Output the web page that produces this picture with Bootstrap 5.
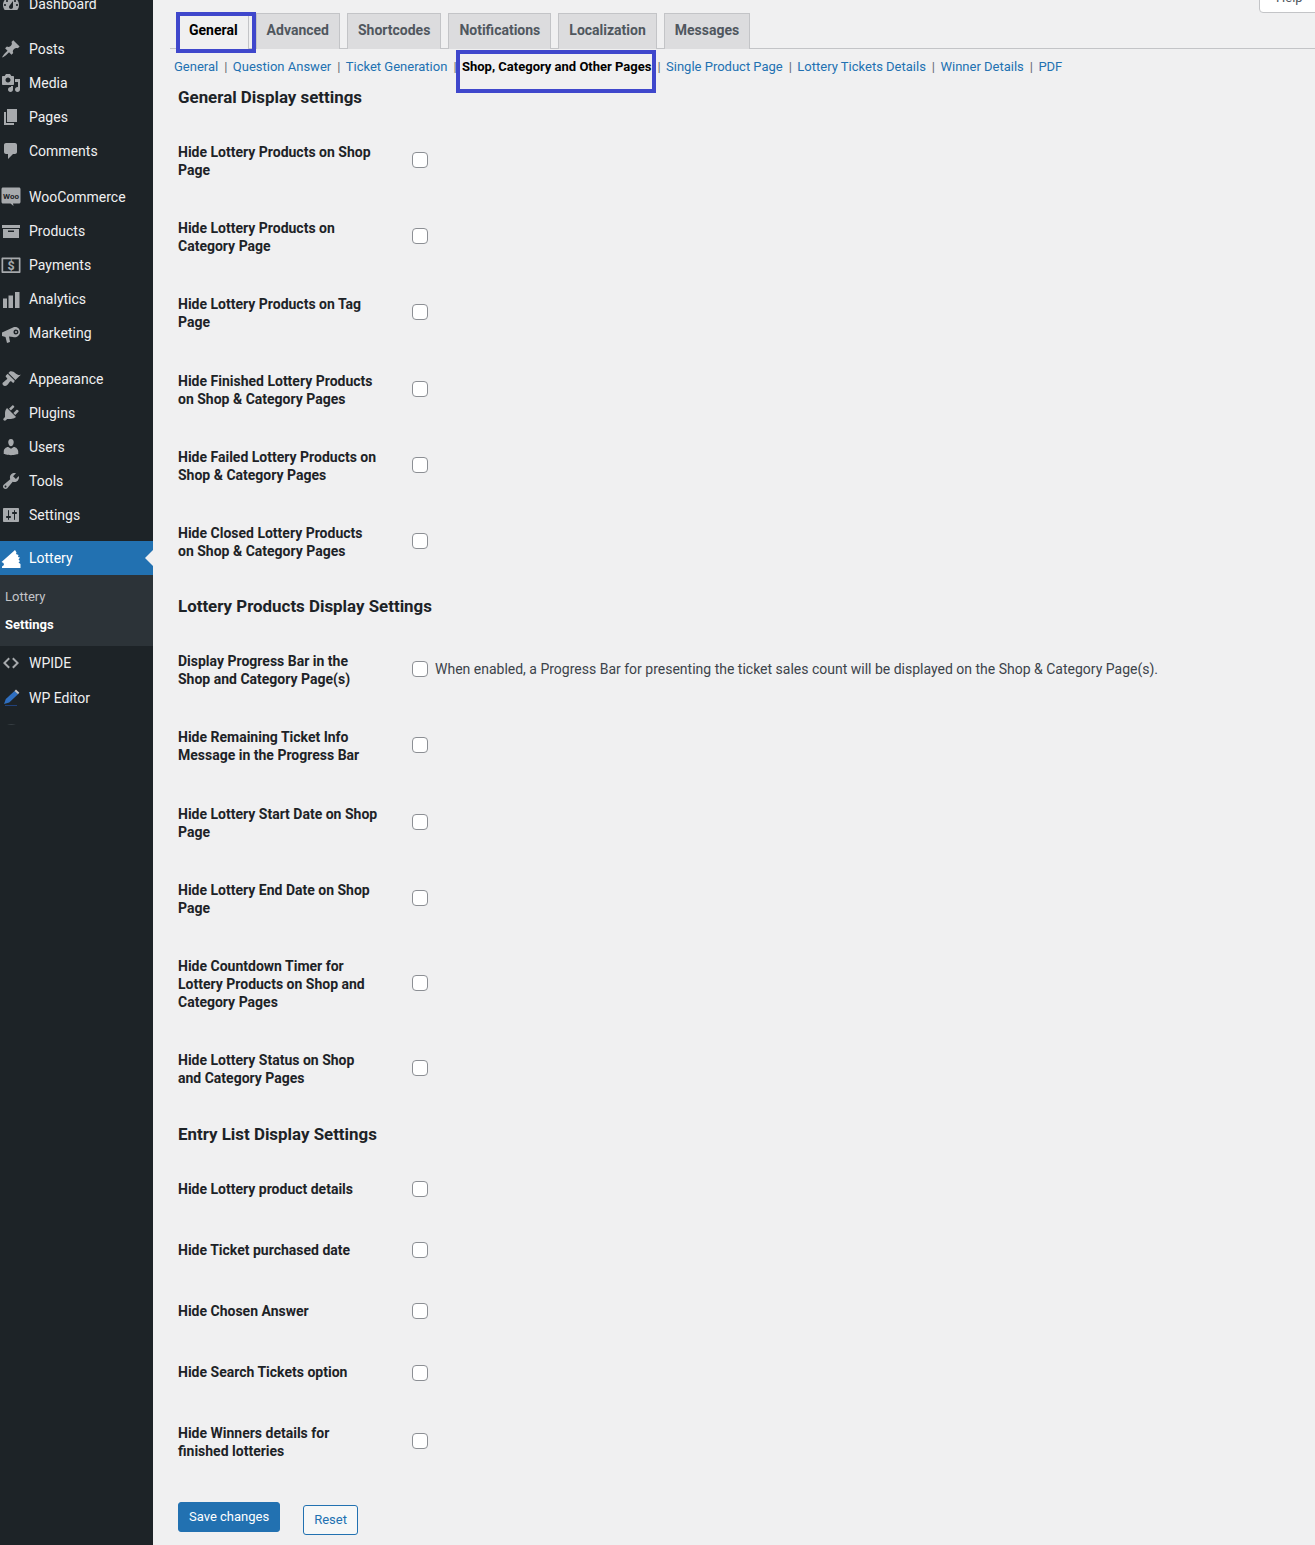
<!DOCTYPE html>
<html lang="en">
<head>
<meta charset="utf-8">
<title>Lottery Settings</title>
<link href="https://cdn.jsdelivr.net/npm/bootstrap@5.3.0/dist/css/bootstrap.min.css" rel="stylesheet">
<style>
html,body{height:1545px;overflow:hidden;background:#f0f0f1}
body{font-family:Roboto,"Liberation Sans",sans-serif;font-size:14px;line-height:1.3;color:#3c434a}
.wp-shell{height:1545px;overflow:hidden}
.wp-side{width:153px;flex:none;background:#1d2327;height:1545px;overflow:hidden;padding-top:0}
.wp-menu{margin:-13px 0 0;padding:0;list-style:none}
.wp-menu>li>a{display:flex;align-items:center;height:34px;color:#f0f0f1;text-decoration:none;font-size:14px;position:relative}
.wp-ico{width:20px;height:20px;margin:0 8px 0 1px;flex:none;fill:#a7aaad}
.gap-after{margin-bottom:12px}
.gap-first{margin-bottom:11px}
.gap-before-lot{margin-bottom:9px}
.wp-menu>li>a.cur{background:#2271b1;color:#fff}
.cur .wp-ico{fill:#fff}
.cur::after{content:"";position:absolute;right:0;top:9px;border:8px solid transparent;border-right-color:#f0f0f1;border-left:0}
.wp-sub{background:#2c3338;height:71px;padding:8px 0 0;margin:0;list-style:none}
.wp-sub a{display:block;height:28px;line-height:28px;padding-left:5px;font-size:13px;color:#c3c4c7;text-decoration:none}
.wp-sub a.on{color:#fff;font-weight:700}
.wp-pad{margin-bottom:1px}
.wp-main{flex:1;min-width:0;padding-left:17px}
.tab-row{height:49px;border-bottom:1px solid #c3c4c7}
.tab-strip{padding:13px 0 0 8px;gap:7px;border:0;margin:0;flex-wrap:nowrap}
.tab-link{display:block;height:36px;padding:0 10px;line-height:33px;border:1px solid #c3c4c7;border-bottom:0;background:#dcdcde;color:#50575e;font-weight:700;font-size:14px;text-decoration:none;position:relative;white-space:nowrap}
.tab-link.now{background:#f0f0f1;color:#000;border-bottom-color:#f0f0f1}
.blue-box{position:absolute;border:4px solid #3f47cc;pointer-events:none}
.box-a{left:-3px;top:-2px;width:80px;height:41px}
.box-b{left:-6px;top:-8px;width:200px;height:43px}
.help-tab{width:70px;height:26px;margin:-13px -14px 0 0;background:#fff;border:1px solid #c3c4c7;border-radius:0 0 0 4px;font-size:13px;padding-left:16px;line-height:19px;flex:none;color:#50575e}
.sub-links{margin:0;padding:0 0 0 4px;list-style:none;font-size:13px;line-height:17px;margin-top:9px;color:#646970;height:17px;white-space:nowrap}
.sub-links a{color:#2271b1;text-decoration:none}
.sub-links li{display:inline-block;position:relative}
.sub-links .sep{margin:0 5.4px 0 6px}
.sub-links a.here{color:#000;font-weight:700}
.sect{font-size:16.9px;line-height:22px;font-weight:700;color:#1d2327;margin:0;padding-left:8px}
.sect-a{margin-top:11px;margin-bottom:14px}
.sect-b{margin-top:16px;margin-bottom:14px}
.sect-c{margin-top:17px;margin-bottom:13px}
.opts{border-collapse:collapse;margin-left:8px}
.opts th{width:210px;padding:21px 10px 19px 0;font-weight:700;font-size:14px;line-height:18.1px;color:#1d2327;vertical-align:top;text-align:left}
.opts tr.one-line th{padding-top:21.55px;padding-bottom:21.55px}
.opts td{padding:15px 0 15px 24px;vertical-align:middle;white-space:nowrap;font-size:14px;color:#3c434a;line-height:18px}
.opts .form-check-input{width:16px;height:16px;margin:0 7px 0 0;border:1px solid #8c8f94;border-radius:4px;float:none;vertical-align:-3px;background-color:#fff}
.act-row{padding:23px 0 0 8px;gap:23px}
.btn-save{background:#2271b1;border:1px solid #2271b1;color:#fff;font-size:13px;line-height:28px;height:30px;padding:0 10px;border-radius:3px}
.btn-reset{background:#f6f7f7;border:1px solid #2271b1;color:#2271b1;font-size:13px;line-height:28px;height:30px;padding:0 10px;border-radius:3px;margin-top:3px}
</style>
</head>
<body>
<div class="wp-shell d-flex">
<nav class="wp-side">
<ul class="wp-menu">
<li class="gap-first"><a href="#"><svg class="wp-ico" viewBox="0 0 20 20"><path d="M3.76 16h12.48c1.1-1.37 1.76-3.11 1.76-5 0-4.42-3.58-8-8-8s-8 3.58-8 8c0 1.89.66 3.63 1.76 5zM10 4c.55 0 1 .45 1 1s-.45 1-1 1-1-.45-1-1 .45-1 1-1zM6 6c.55 0 1 .45 1 1s-.45 1-1 1-1-.45-1-1 .45-1 1-1zm8 0c.55 0 1 .45 1 1s-.45 1-1 1-1-.45-1-1 .45-1 1-1zm-5.37 5.55L12 7v6c0 1.1-.9 2-2 2s-2-.9-2-2c0-.57.24-1.08.63-1.45zM4 10c.55 0 1 .45 1 1s-.45 1-1 1-1-.45-1-1 .45-1 1-1zm12 0c.55 0 1 .45 1 1s-.45 1-1 1-1-.45-1-1 .45-1 1-1z" fill-rule="evenodd"/></svg>Dashboard</a></li>
<li><a href="#"><svg class="wp-ico" viewBox="0 0 20 20"><path d="M10.44 3.02l1.82-1.82 6.36 6.35-1.83 1.82c-1.05-.68-2.48-.57-3.41.36l-.75.75c-.92.93-1.04 2.35-.35 3.41l-1.83 1.82-2.41-2.41-2.8 2.79c-.42.42-3.38 2.71-3.8 2.29s1.86-3.39 2.28-3.81l2.79-2.79L4.1 9.36l1.83-1.82c1.05.69 2.48.57 3.4-.36l.75-.75c.93-.92 1.05-2.35.36-3.41z"/></svg>Posts</a></li>
<li><a href="#"><svg class="wp-ico" viewBox="0 0 20 20"><path fill-rule="evenodd" d="M13 11V4c0-.55-.45-1-1-1h-1.67L9 1H5L3.67 3H2c-.55 0-1 .45-1 1v7c0 .55.45 1 1 1h10c.55 0 1-.45 1-1zM7 4.500c1.380 0 2.500 1.120 2.500 2.500S8.380 9.500 7 9.500 4.500 8.380 4.500 7 5.620 4.500 7 4.500zM14 6h5v10.500c0 1.380-1.120 2.500-2.500 2.500S14 17.880 14 16.500s1.120-2.500 2.500-2.500c.17 0 .34.02.5.05V9h-3V6zm-4 8.050V13h2v3.500c0 1.380-1.120 2.500-2.500 2.500S7 17.880 7 16.500 8.120 14 9.500 14c.17 0 .34.02.5.05z"/></svg>Media</a></li>
<li><a href="#"><svg class="wp-ico" viewBox="0 0 20 20"><path d="M6 15V2h10v13H6zm-1 1h8v2H3V5h2v11z"/></svg>Pages</a></li>
<li class="gap-after"><a href="#"><svg class="wp-ico" viewBox="0 0 20 20"><path d="M5 2h9c1.100 0 2 .9 2 2v7c0 1.100-.9 2-2 2h-2l-5 5v-5H5c-1.100 0-2-.9-2-2V4c0-1.100.9-2 2-2z"/></svg>Comments</a></li>
<li><a href="#"><svg class="wp-ico" viewBox="0 0 20 20"><path d="M2 .5h16c.8 0 1.500.7 1.500 1.500v13c0 .8-.7 1.500-1.500 1.500h-6l.5 2.500-3-2.500H2c-.8 0-1.500-.7-1.500-1.500V2C.5 1.200 1.200.5 2 .5z"/><text x="10" y="11.500" text-anchor="middle" font-family="Roboto,sans-serif" font-size="8" font-weight="700" fill="#1d2327">Woo</text></svg>WooCommerce</a></li>
<li><a href="#"><svg class="wp-ico" viewBox="0 0 20 20"><path fill-rule="evenodd" d="M1 4h18v3H1zM2 8h16v9H2zM7 9.500v1.500h6V9.500z"/></svg>Products</a></li>
<li><a href="#"><svg class="wp-ico" viewBox="0 0 20 20"><path fill-rule="evenodd" d="M1.500 2.500h17c.6 0 1 .4 1 1v13.500c0 .6-.4 1-1 1h-17c-.6 0-1-.4-1-1V3.500c0-.6.4-1 1-1zM2.200 4.200v12.100h15.600V4.200z"/><text x="10" y="14.800" text-anchor="middle" font-family="Roboto,sans-serif" font-size="12.500" font-weight="700" fill="#a7aaad">$</text></svg>Payments</a></li>
<li><a href="#"><svg class="wp-ico" viewBox="0 0 20 20"><path d="M2 9.500h4V19H2zM7.500 6.500h4.500V19H7.500zM14 3h4.500v16H14z"/></svg>Analytics</a></li>
<li class="gap-after"><a href="#"><svg class="wp-ico" viewBox="0 0 20 20"><path fill-rule="evenodd" d="M1 9.500 12 4.500c3-1.500 7 .5 7 4.500s-4 6-7 5L8 13.500 9 19l-3 1-1.500-6L1 13zM15 6.500a2.500 2.500 0 1 0 0 5 2.500 2.500 0 0 0 0-5z"/><circle cx="15" cy="9" r="1"/></svg>Marketing</a></li>
<li><a href="#"><svg class="wp-ico" viewBox="0 0 20 20"><path d="M14.480 11.060L7.410 3.990l1.500-1.500c.5-.56 2.300-.47 3.510.32 1.210.8 1.430 1.280 2.910 2.100 1.180.64 2.450 1.260 4.450.85zm-.71.71L6.700 4.700 4.930 6.470c-.39.39-.39 1.020 0 1.410l1.060 1.060c.39.39.39 1.030 0 1.420-.6.6-1.430 1.110-2.210 1.690-.35.26-.7.53-1.010.84C1.430 13.230.91 14.960 2.180 16.230c1.270 1.270 3 .75 4.340-.59.31-.31.58-.66.84-1.010.58-.78 1.090-1.610 1.690-2.210.39-.39 1.030-.39 1.420 0l1.060 1.060c.39.39 1.020.39 1.410 0z"/></svg>Appearance</a></li>
<li><a href="#"><svg class="wp-ico" viewBox="0 0 20 20"><path d="M13.110 4.360L9.870 7.600 8 5.730l3.240-3.240c.35-.34 1.050-.2 1.560.32.52.51.66 1.210.31 1.550zm-8 1.770l.91-1.120 9.010 9.010-1.190.84c-.71.71-2.630 1.160-3.820 1.160H6.140L4.900 17.260c-.59.59-1.540.59-2.120 0-.59-.58-.59-1.530 0-2.120l1.240-1.240v-3.880c0-1.130.4-3.190 1.090-3.890zm7.260 3.970l3.240-3.240c.34-.35 1.040-.21 1.550.31.52.51.66 1.210.31 1.550l-3.240 3.250z"/></svg>Plugins</a></li>
<li><a href="#"><svg class="wp-ico" viewBox="0 0 20 20"><path d="M10 9.250c-2.270 0-2.730-3.440-2.730-3.440C7 4.020 7.820 2 9.970 2c2.160 0 2.980 2.020 2.710 3.810 0 0-.41 3.440-2.680 3.440zm0 2.570L12.720 10c2.390 0 4.520 2.330 4.520 4.530v2.490s-3.650 1.130-7.240 1.130c-3.650 0-7.240-1.130-7.240-1.130v-2.490c0-2.250 1.940-4.480 4.470-4.480z"/></svg>Users</a></li>
<li><a href="#"><svg class="wp-ico" viewBox="0 0 20 20"><path fill-rule="evenodd" d="M16.680 9.770c-1.340 1.340-3.300 1.670-4.950.99l-5.410 6.520c-.99.99-2.590.99-3.580 0s-.99-2.590 0-3.570l6.520-5.420c-.68-1.650-.35-3.610.99-4.950 1.280-1.280 3.120-1.620 4.720-1.060l-2.890 2.890 2.820 2.820 2.860-2.870c.53 1.580.18 3.390-1.080 4.650zM3.810 16.210c.4.39 1.040.39 1.430 0 .4-.4.4-1.040 0-1.430-.39-.4-1.030-.4-1.430 0-.39.39-.39 1.030 0 1.430z"/></svg>Tools</a></li>
<li class="gap-before-lot"><a href="#"><svg class="wp-ico" viewBox="0 0 20 20"><path fill-rule="evenodd" d="M18 16V4c0-.55-.45-1-1-1H3c-.55 0-1 .45-1 1v12c0 .55.45 1 1 1h14c.55 0 1-.45 1-1zM8 11h1c.55 0 1 .45 1 1s-.45 1-1 1H8v1.500c0 .28-.22.5-.5.5s-.5-.22-.5-.5V13H6c-.55 0-1-.45-1-1s.45-1 1-1h1V5.500c0-.28.22-.5.5-.5s.5.22.5.5V11zm5-2h-1c-.55 0-1-.45-1-1s.45-1 1-1h1V5.500c0-.28.22-.5.5-.5s.5.22.5.5V7h1c.55 0 1 .45 1 1s-.45 1-1 1h-1v5.500c0 .28-.22.5-.5.5s-.5-.22-.5-.5V9z"/></svg>Settings</a></li>
<li><a href="#" class="cur"><svg class="wp-ico" viewBox="0 0 20 20"><path d="M14 2l1.500 2.500-.5 1.500 2.500 1-.5 2 2 .5-1.500 2 1.500 1.500-1.500 1.500 2 1.500v5H1v-2.500l2-1.500-.5-2-2-1z"/></svg>Lottery</a>
<ul class="wp-sub"><li><a href="#">Lottery</a></li><li><a href="#" class="on">Settings</a></li></ul></li>
<li class="wp-pad"><a href="#"><svg class="wp-ico" viewBox="0 0 20 20"><path d="M7.500 4.500 2 10l5.500 5.500 1.400-1.400L4.800 10l4.100-4.100zM12.500 4.500 18 10l-5.500 5.500-1.400-1.400 4.100-4.100-4.100-4.100z"/></svg>WPIDE</a></li>
<li><a href="#"><svg class="wp-ico" viewBox="0 0 20 20"><path style="fill:#2f6fc0" d="M3 16l1.800-5L13.500 3l3.500 3.300-8.800 8.200z"/><path style="fill:#c3c4c7" d="M13.500 3 15 1.500l3.300 3.200L17 6.300z"/><path style="fill:#22427a" d="M4 17h12v1H4z"/></svg>WP Editor</a></li>
<li><a href="#" aria-label="More"><svg class="wp-ico" viewBox="0 0 20 20"><path style="fill:#3f474d" d="M6 3q4-1.500 9 0z"/></svg></a></li>
</ul>
</nav>
<main class="wp-main">
<div class="tab-row d-flex justify-content-between">
<div class="nav tab-strip">
<a class="tab-link now" href="#">General<span class="blue-box box-a"></span></a>
<a class="tab-link" href="#">Advanced</a>
<a class="tab-link" href="#">Shortcodes</a>
<a class="tab-link" href="#">Notifications</a>
<a class="tab-link" href="#">Localization</a>
<a class="tab-link" href="#">Messages</a>
</div>
<div class="help-tab">Help</div>
</div>
<ul class="sub-links">
<li><a href="#">General</a><span class="sep">|</span></li><li><a href="#">Question Answer</a><span class="sep">|</span></li><li><a href="#">Ticket Generation</a><span class="sep">|</span></li><li><a href="#" class="here">Shop, Category and Other Pages</a><span class="blue-box box-b"></span><span class="sep">|</span></li><li><a href="#">Single Product Page</a><span class="sep">|</span></li><li><a href="#">Lottery Tickets Details</a><span class="sep">|</span></li><li><a href="#">Winner Details</a><span class="sep">|</span></li><li><a href="#">PDF</a></li>
</ul>
<h2 class="sect sect-a">General Display settings</h2>
<table class="opts"><tbody>
<tr><th>Hide Lottery Products on Shop Page</th><td><input class="form-check-input" type="checkbox"></td></tr>
<tr><th>Hide Lottery Products on Category Page</th><td><input class="form-check-input" type="checkbox"></td></tr>
<tr><th>Hide Lottery Products on Tag Page</th><td><input class="form-check-input" type="checkbox"></td></tr>
<tr><th>Hide Finished Lottery Products on Shop &amp; Category Pages</th><td><input class="form-check-input" type="checkbox"></td></tr>
<tr><th>Hide Failed Lottery Products on Shop &amp; Category Pages</th><td><input class="form-check-input" type="checkbox"></td></tr>
<tr><th>Hide Closed Lottery Products on Shop &amp; Category Pages</th><td><input class="form-check-input" type="checkbox"></td></tr>
</tbody></table>
<h2 class="sect sect-b">Lottery Products Display Settings</h2>
<table class="opts"><tbody>
<tr><th>Display Progress Bar in the Shop and Category Page(s)</th><td><input class="form-check-input" type="checkbox">When enabled, a Progress Bar for presenting the ticket sales count will be displayed on the Shop &amp; Category Page(s).</td></tr>
<tr><th>Hide Remaining Ticket Info Message in the Progress Bar</th><td><input class="form-check-input" type="checkbox"></td></tr>
<tr><th>Hide Lottery Start Date on Shop Page</th><td><input class="form-check-input" type="checkbox"></td></tr>
<tr><th>Hide Lottery End Date on Shop Page</th><td><input class="form-check-input" type="checkbox"></td></tr>
<tr><th>Hide Countdown Timer for Lottery Products on Shop and Category Pages</th><td><input class="form-check-input" type="checkbox"></td></tr>
<tr><th>Hide Lottery Status on Shop and Category Pages</th><td><input class="form-check-input" type="checkbox"></td></tr>
</tbody></table>
<h2 class="sect sect-c">Entry List Display Settings</h2>
<table class="opts"><tbody>
<tr class="one-line"><th>Hide Lottery product details</th><td><input class="form-check-input" type="checkbox"></td></tr>
<tr class="one-line"><th>Hide Ticket purchased date</th><td><input class="form-check-input" type="checkbox"></td></tr>
<tr class="one-line"><th>Hide Chosen Answer</th><td><input class="form-check-input" type="checkbox"></td></tr>
<tr class="one-line"><th>Hide Search Tickets option</th><td><input class="form-check-input" type="checkbox"></td></tr>
<tr><th>Hide Winners details for finished lotteries</th><td><input class="form-check-input" type="checkbox"></td></tr>
</tbody></table>
<div class="act-row d-flex align-items-start">
<button type="button" class="btn btn-save">Save changes</button>
<button type="button" class="btn btn-reset">Reset</button>
</div>
</main>
</div>
<script src="https://cdn.jsdelivr.net/npm/bootstrap@5.3.0/dist/js/bootstrap.bundle.min.js"></script>
</body>
</html>
